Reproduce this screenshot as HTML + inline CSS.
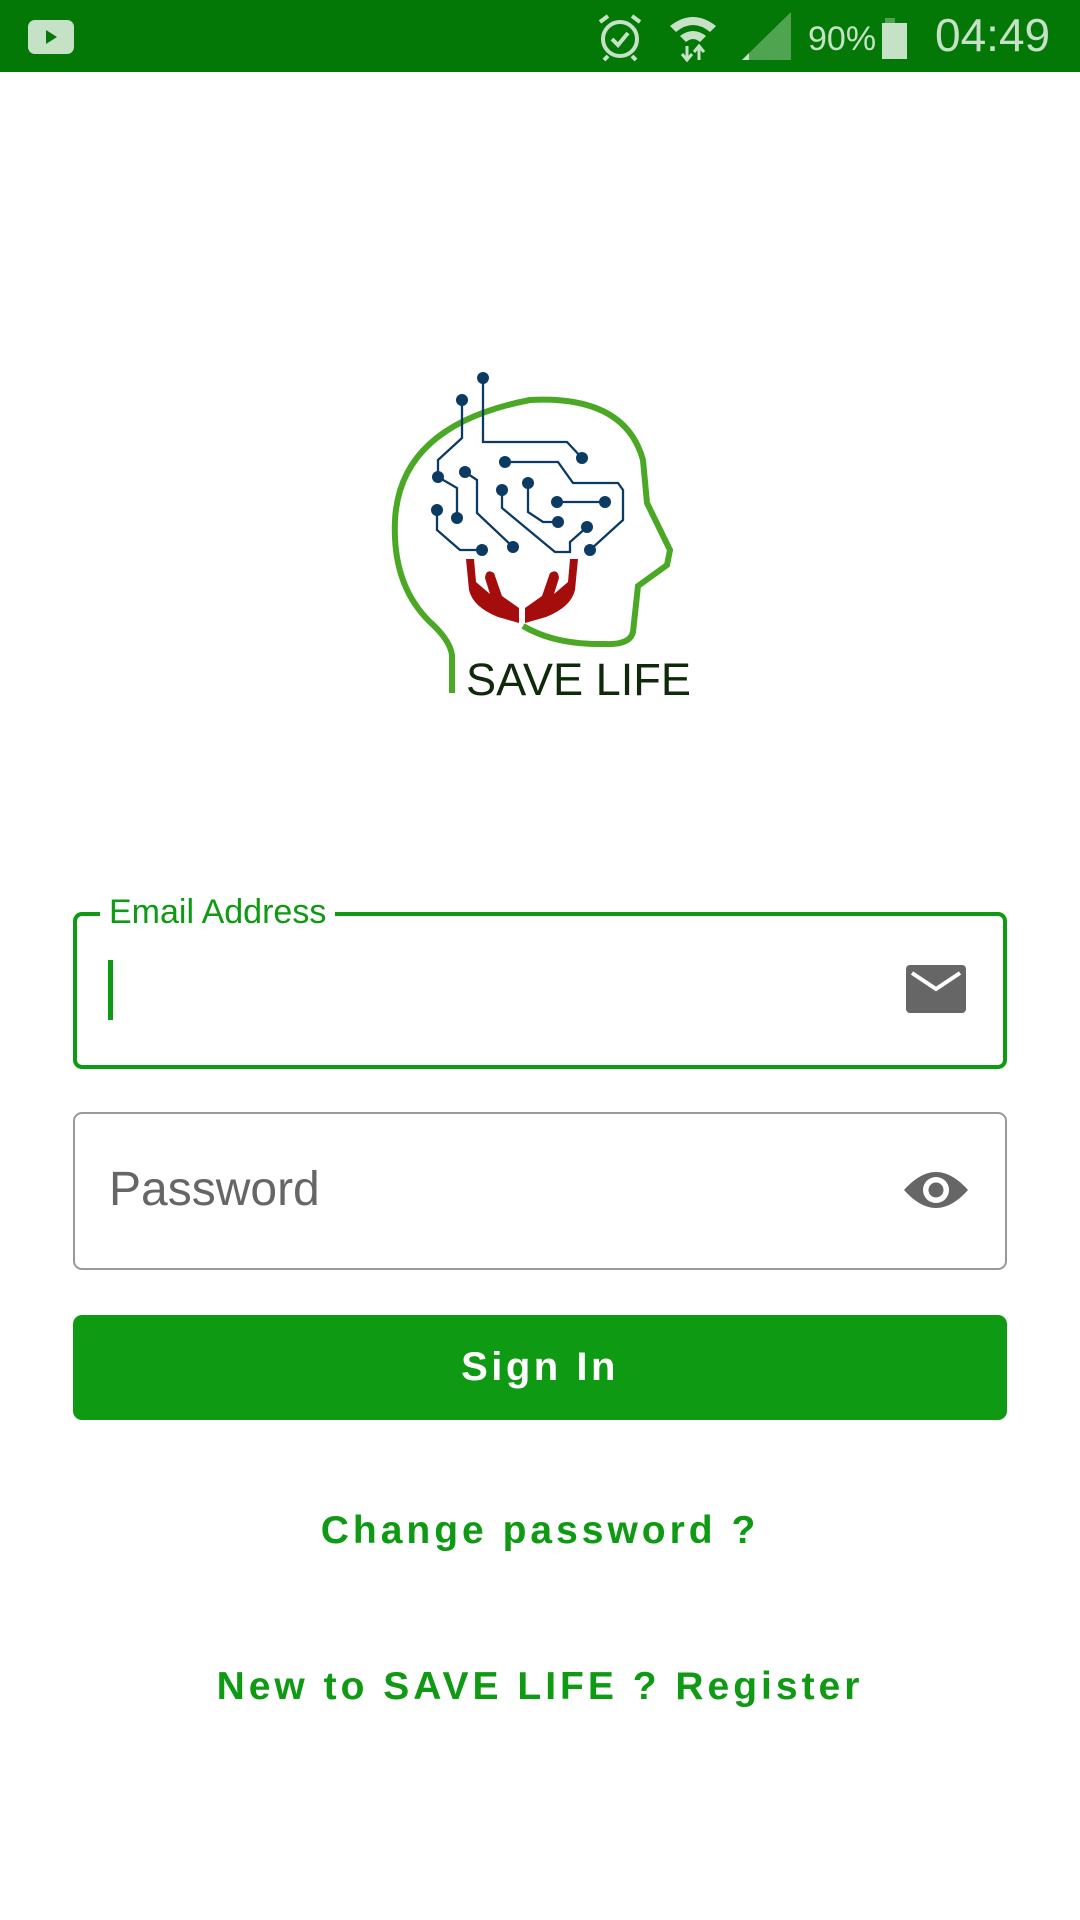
<!DOCTYPE html>
<html><head><meta charset="utf-8"><style>
*{margin:0;padding:0;box-sizing:border-box}
body{width:1080px;height:1920px;background:#fff;position:relative;overflow:hidden;font-family:"Liberation Sans",Roboto,sans-serif}
.sb{position:absolute;left:0;top:0;width:1080px;height:72px;background:#037807}
.abs{position:absolute}
.field{position:absolute;left:73px;width:934px;border-radius:9px}
.link{position:absolute;left:0;width:1080px;text-align:center;color:#0e9a12;font-weight:bold;font-size:39px;letter-spacing:4px}
</style></head><body>
<div class="sb">
  <div class="abs" style="left:28px;top:20px;width:46px;height:34px;background:#c6e2c6;border-radius:7px"></div>
  <div class="abs" style="left:46px;top:30px;width:0;height:0;border-left:11px solid #037807;border-top:7px solid transparent;border-bottom:7px solid transparent"></div>
  <svg class="abs" style="left:590px;top:10px" width="460" height="54" viewBox="0 0 460 54">
    <g fill="none" stroke="#c6e2c6" stroke-width="4"><circle cx="30" cy="29" r="17"/><path d="M22 29l6 6 10-12"/><path d="M10 12l8-6M50 12l-8-6M18 46l-4 4M42 46l4 4"/></g>
    <path d="M80 16 Q103 -2 126 16 L120 22 Q103 8 86 22Z M90 26 Q103 16 116 26 L110 32 Q103 26 96 32Z" fill="#c6e2c6"/>
    <path d="M97 36v14M92 44l5 6 5-6M109 50v-14M104 42l5-6 5 6" stroke="#c6e2c6" stroke-width="3" fill="none"/>
    <path d="M152 50 L201 2 L201 50Z" fill="#4fa44f"/><path d="M152 50 L159 43 L159 50Z" fill="#c6e2c6"/>
    <text x="218" y="40" fill="#c6e2c6" font-size="34" font-family="Liberation Sans">90%</text>
    <rect x="295" y="8" width="10" height="6" fill="#4fa44f"/><rect x="292" y="13" width="25" height="36" fill="#c6e2c6"/>
    <text x="345" y="41" fill="#c6e2c6" font-size="46" font-family="Liberation Sans">04:49</text>
  </svg>
</div>

<svg class="abs" style="left:380px;top:360px" width="330" height="350" viewBox="0 0 330 350">
  <path d="M72 333 L72 295 Q70 280 50 262 Q12 225 15 160 Q20 65 150 40 Q245 35 263 100 L267 143 L290 190 L287 205 L258 226 L253 272 Q250 285 225 284 Q175 285 143 266" fill="none" stroke="#4aa825" stroke-width="6"/>
  <g fill="none" stroke="#0b3a63" stroke-width="2.3">
    <path d="M103 18V82H187L202 98"/>
    <path d="M82 40V78L58 100V117L77 128V158"/>
    <path d="M85 112L97 120V153L133 187"/>
    <path d="M57 150V170L80 190H102"/>
    <path d="M125 102H178L193 123H238L243 130V160L210 190"/>
    <path d="M122 130V148L175 192H190V182L207 167"/>
    <path d="M148 123V152L163 162H178"/>
    <path d="M177 142H225"/>
  </g>
  <g fill="#0b3a63">
    <circle cx="103" cy="18" r="6"/><circle cx="82" cy="40" r="6"/><circle cx="202" cy="98" r="6"/>
    <circle cx="58" cy="117" r="6"/><circle cx="77" cy="158" r="6"/><circle cx="85" cy="112" r="6"/>
    <circle cx="133" cy="187" r="6"/><circle cx="57" cy="150" r="6"/><circle cx="102" cy="190" r="6"/>
    <circle cx="125" cy="102" r="6"/><circle cx="210" cy="190" r="6"/><circle cx="122" cy="130" r="6"/>
    <circle cx="207" cy="167" r="6"/><circle cx="148" cy="123" r="6"/><circle cx="178" cy="162" r="6"/>
    <circle cx="177" cy="142" r="6"/><circle cx="225" cy="142" r="6"/>
  </g>
  <g fill="#a50d0d">
    <path d="M86 199L94 199L96 222L110 234L105 218Q106 208 114 213L122 236L139 248L139 263L118 257Q93 247 89 230Z"/>
    <path d="M198 199L190 199L188 222L174 234L179 218Q178 208 170 213L162 236L145 248L145 263L166 257Q191 247 195 230Z"/>
  </g>
  <text x="86" y="335" font-size="45" fill="#0f2a0a" font-family="Liberation Sans" textLength="225" lengthAdjust="spacingAndGlyphs">SAVE LIFE</text>
</svg>

<div class="field" style="top:912px;height:157px;border:4px solid #0e9a12"></div>
<div class="abs" style="left:100px;top:894px;background:#fff;padding:0 9px;color:#0e9a12;font-size:34px;line-height:36px">Email Address</div>
<div class="abs" style="left:108px;top:960px;width:5px;height:60px;background:#0e9a12"></div>
<svg class="abs" style="left:906px;top:965px" width="60" height="50" viewBox="0 0 60 50"><rect x="0" y="0" width="60" height="48" rx="4" fill="#666"/><path d="M6 8L30 24L54 8" fill="none" stroke="#fff" stroke-width="4"/></svg>

<div class="field" style="top:1112px;height:158px;border:2px solid #9a9a9a"></div>
<div class="abs" style="left:109px;top:1163px;color:#666;font-size:48px;line-height:54px">Password</div>
<svg class="abs" style="left:902px;top:1166px" width="68" height="48" viewBox="0 0 68 48"><path d="M2 24Q34 -12 66 24Q34 60 2 24Z" fill="#666"/><circle cx="34" cy="24" r="13" fill="#fff"/><circle cx="34" cy="24" r="7.5" fill="#666"/></svg>

<div class="abs" style="left:73px;top:1315px;width:934px;height:105px;background:#0e9a12;border-radius:9px;color:#fff;font-weight:bold;font-size:40px;letter-spacing:3.5px;text-align:center;line-height:105px">Sign In</div>

<div class="link" style="top:1508px;line-height:46px">Change password ?</div>
<div class="link" style="top:1664px;line-height:46px">New to SAVE LIFE ? Register</div>
</body></html>
